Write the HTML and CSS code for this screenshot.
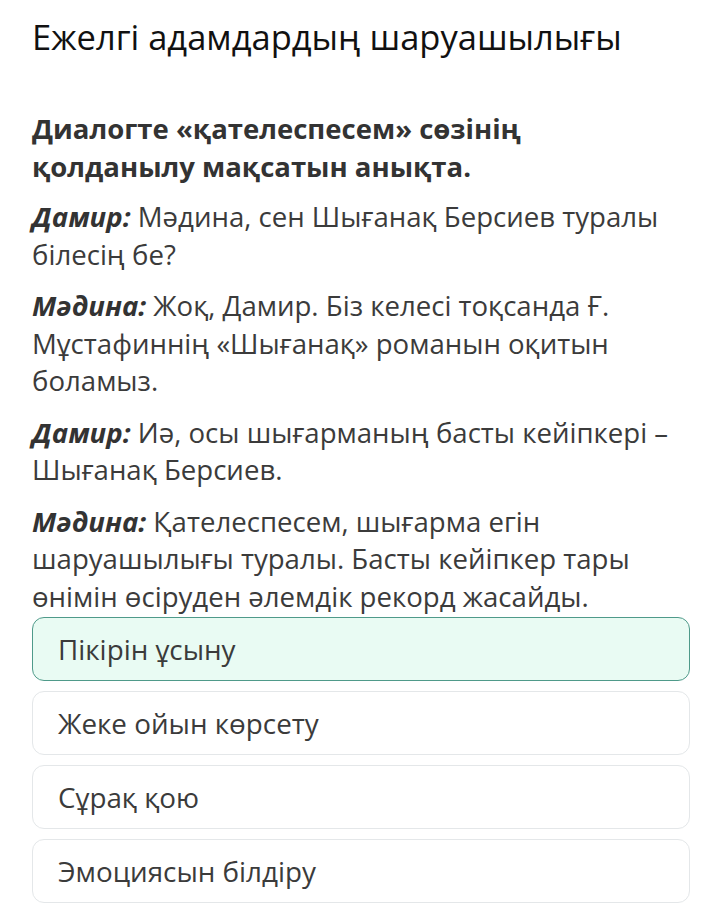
FILE: index.html
```html
<html lang="kk">
<head>
    <meta charset="UTF-8">
    <meta name="viewport" content="width=device-width, initial-scale=1.0">
    <title>Ежелгі адамдардың шаруашылығы</title>
    <link rel="stylesheet" href="styles.css">
</head>
<body>
    <header>
        <h1>Ежелгі адамдардың шаруашылығы</h1>
    </header>
    <main>
        <!-- Сұрақ -->
        <section class="question">
            <h2>Диалогте «қателеспесем» сөзінің қолданылу мақсатын анықта.</h2>
            <p><b>Дамир:</b> Мәдина, сен Шығанақ Берсиев туралы білесің бе?</p>
            <p><b>Мәдина:</b> Жоқ, Дамир. Біз келесі тоқсанда Ғ. Мұстафиннің «Шығанақ» романын оқитын боламыз.</p>
            <p><b>Дамир:</b> Иә, осы шығарманың басты кейіпкері – Шығанақ Берсиев.</p>
            <p><b>Мәдина:</b> Қателеспесем, шығарма егін шаруашылығы туралы. Басты кейіпкер тары өнімін өсіруден әлемдік рекорд жасайды.</p>
        </section>

        <!-- Жауап нұсқалары -->
        <section class="options">
            <div class="option selected">Пікірін ұсыну</div>
            <div class="option">Жеке ойын көрсету</div>
            <div class="option">Сұрақ қою</div>
            <div class="option">Эмоциясын білдіру</div>
        </section>
    </main>
</body>
</html>
```

FILE: styles.css
```css
body {
    font-family: "Open Sans", "DejaVu Sans", sans-serif;
    margin: 0;
    padding: 0;
    background-color: white;
    color: #3b3b3b;
}
header {
    padding: 14px 32px 0;
}
h1 {
    margin: 0;
    font-size: 34.5px;
    font-weight: 400;
    line-height: 46px;
    color: #111;
}
main {
    padding: 50px 32px 0 32px;
}
h2 {
    margin: 0 0 12px;
    font-size: 27.5px;
    font-weight: 700;
    line-height: 38px;
    color: #333;
    width: 540px;
}
.question p {
    margin: 0 0 14px;
    font-size: 27.6px;
    line-height: 37.5px;
    width: 650px;
}
.question p:last-child {
    margin-bottom: 0;
}
.question b {
    font-style: italic;
    color: #333;
}
.options {
    display: flex;
    flex-direction: column;
    gap: 10px;
    margin-top: 2px;
    width: 658px;
}
.option {
    height: 64px;
    box-sizing: border-box;
    display: flex;
    align-items: center;
    padding: 0 25px;
    font-size: 27.8px;
    border: 1px solid #e4e7e9;
    border-radius: 12px;
    background-color: white;
}
.option.selected {
    background-color: #e9fbf3;
    border-color: #4f9a8a;
}
```
